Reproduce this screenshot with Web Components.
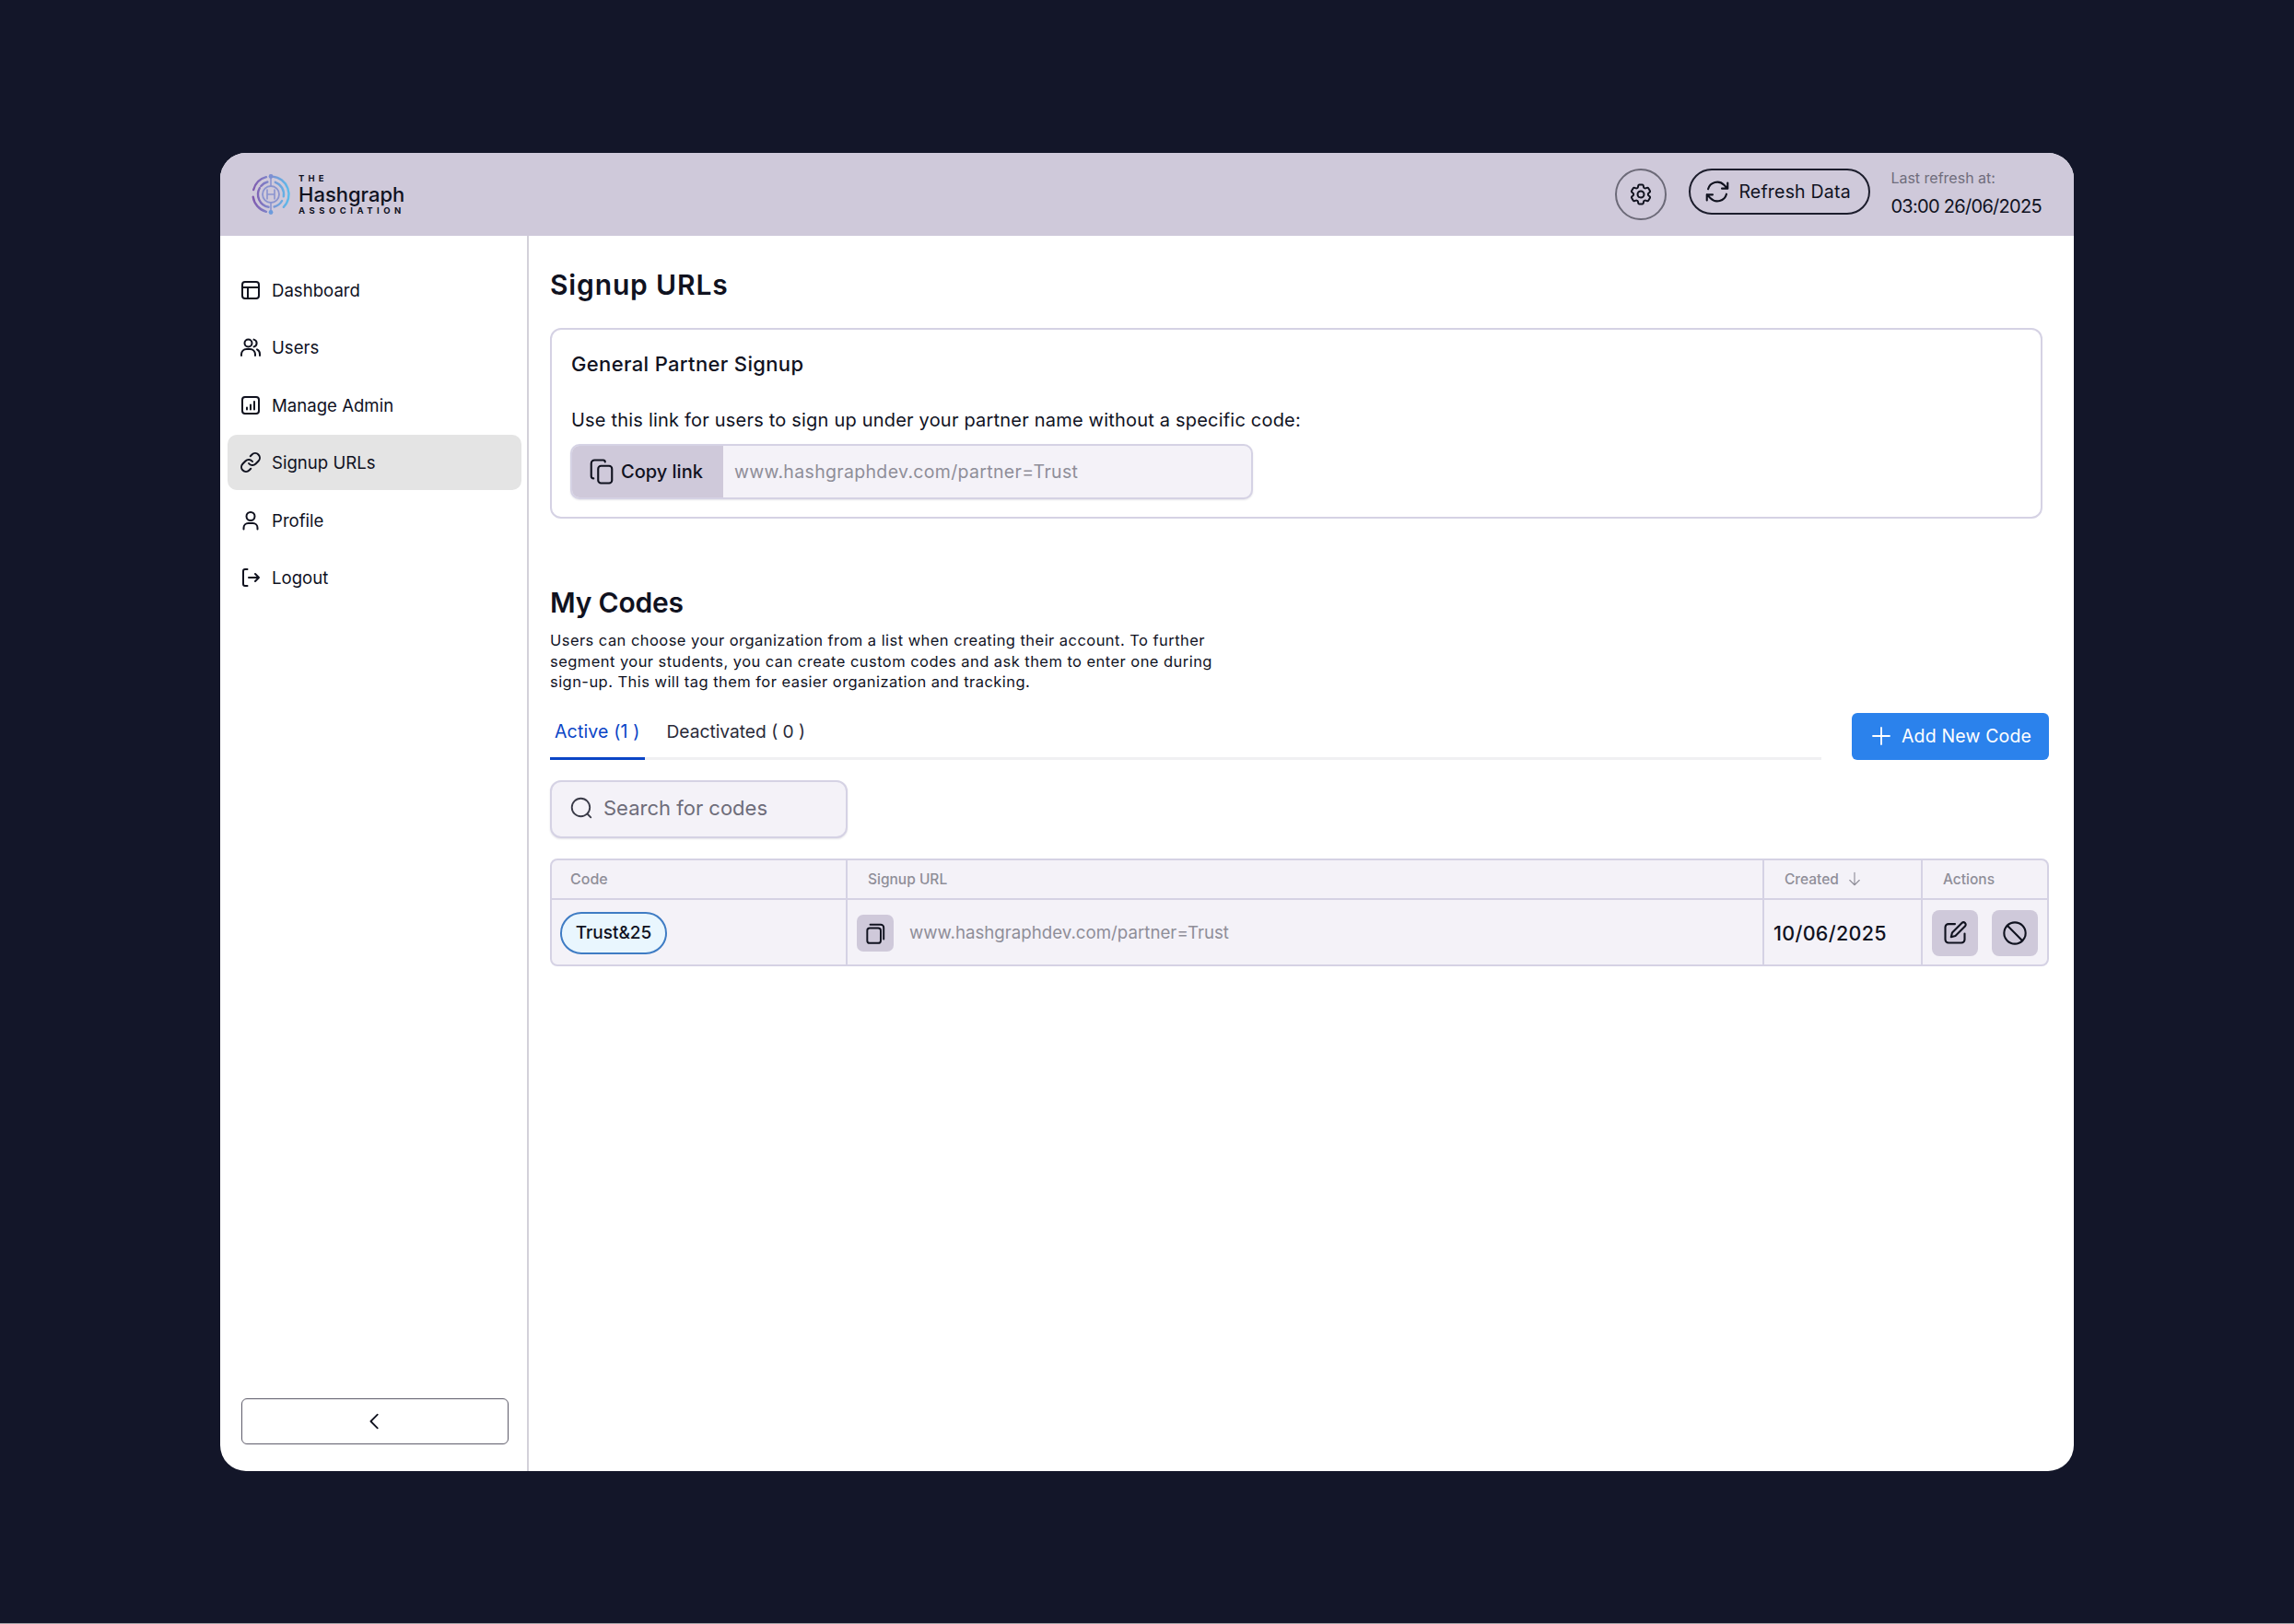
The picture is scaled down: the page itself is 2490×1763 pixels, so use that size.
<!DOCTYPE html>
<html lang="en">
<head>
<meta charset="utf-8">
<title>Signup URLs</title>
<style>
  html { background: #a3a3a8; }
  body { margin: 0; height: 1762px; background: #131629; font-family: Inter, "Liberation Sans", sans-serif; overflow: hidden; }
</style>
</head>
<body>
<app-shell>
  <app-header slot="header"></app-header>
  <side-nav slot="nav">
    <nav-item icon="layout">Dashboard</nav-item>
    <nav-item icon="users">Users</nav-item>
    <nav-item icon="chart">Manage Admin</nav-item>
    <nav-item icon="link" active>Signup URLs</nav-item>
    <nav-item icon="user">Profile</nav-item>
    <nav-item icon="logout">Logout</nav-item>
  </side-nav>
  <signup-card></signup-card>
  <codes-section></codes-section>
</app-shell>

<script>
const ICONS = {
  layout: '<rect x="3" y="3" width="18" height="18" rx="3"/><path d="M3 9h18M9 9v12"/>',
  users: '<circle cx="9.5" cy="7.5" r="4"/><path d="M2 21v-1.5A5.5 5.5 0 0 1 7.5 14h4a5.5 5.5 0 0 1 5.5 5.5V21"/><path d="M15.5 3.6a4 4 0 0 1 0 7.8"/><path d="M19 14.4a5.5 5.5 0 0 1 3 5.1V21"/>',
  chart: '<rect x="3" y="3" width="18" height="18" rx="3"/><path d="M8 16.5v-2M12 16.5v-5M16 16.5V8"/>',
  link: '<path d="M10 13a5 5 0 0 0 7.54.54l3-3a5 5 0 0 0-7.07-7.07l-1.72 1.71"/><path d="M14 11a5 5 0 0 0-7.54-.54l-3 3a5 5 0 0 0 7.07 7.07l1.71-1.71"/>',
  user: '<circle cx="12" cy="7.5" r="4.5"/><path d="M4.5 21.5V20a5 5 0 0 1 5-5h5a5 5 0 0 1 5 5v1.5"/>',
  logout: '<path d="M8.5 21H6a2 2 0 0 1-2-2V5a2 2 0 0 1 2-2h2.5"/><path d="M10 12h11M17 8l4 4-4 4"/>',
  gear: '<path d="M9.594 3.94c.09-.542.56-.94 1.11-.94h2.593c.55 0 1.02.398 1.11.94l.213 1.281c.063.374.313.686.645.87.074.04.147.083.22.127.325.196.72.257 1.075.124l1.217-.456a1.125 1.125 0 0 1 1.37.49l1.296 2.247a1.125 1.125 0 0 1-.26 1.431l-1.003.827c-.293.241-.438.613-.43.992a7.723 7.723 0 0 1 0 .255c-.008.378.137.75.43.991l1.004.827c.424.35.534.955.26 1.43l-1.298 2.247a1.125 1.125 0 0 1-1.369.491l-1.217-.456c-.355-.133-.75-.072-1.076.124a6.47 6.47 0 0 1-.22.128c-.331.183-.581.495-.644.869l-.213 1.281c-.09.543-.56.94-1.11.94h-2.594c-.55 0-1.019-.398-1.11-.94l-.213-1.281c-.062-.374-.312-.686-.644-.87a6.52 6.52 0 0 1-.22-.127c-.325-.196-.72-.257-1.076-.124l-1.217.456a1.125 1.125 0 0 1-1.369-.49l-1.297-2.247a1.125 1.125 0 0 1 .26-1.431l1.004-.827c.292-.24.437-.613.43-.991a6.932 6.932 0 0 1 0-.255c.007-.38-.138-.751-.43-.992l-1.004-.827a1.125 1.125 0 0 1-.26-1.43l1.297-2.247a1.125 1.125 0 0 1 1.37-.491l1.216.456c.356.133.751.072 1.076-.124.072-.044.146-.086.22-.128.332-.183.582-.495.644-.869l.214-1.28Z"/><path d="M15 12a3 3 0 1 1-6 0 3 3 0 0 1 6 0Z"/>',
  refresh: '<path d="M16.023 9.348h4.992M2.985 19.644v-4.992m0 0h4.992m-4.993 0 3.181 3.183a8.25 8.25 0 0 0 13.803-3.7M4.031 9.865a8.25 8.25 0 0 1 13.803-3.7l3.181 3.182m0-4.991v4.99"/>',
  copy: '<rect x="9" y="7" width="12" height="15" rx="2.5"/><path d="M15 3.5v-.1A1.5 1.5 0 0 0 13.5 2H6a3 3 0 0 0-3 3v11a2 2 0 0 0 2 1.9"/>',
  stack: '<rect x="4" y="7" width="13.5" height="15" rx="2.5"/><path d="M7 3.5h10.5a3 3 0 0 1 3 3V18"/>',
  search: '<circle cx="11.5" cy="11.5" r="9"/><path d="m18 18 3.5 3.5"/>',
  plus: '<path d="M12 3v18M3 12h18"/>',
  down: '<path d="M12 3v18M5 14l7 7 7-7"/>',
  pen: '<path d="M12 3.5H6a3 3 0 0 0-3 3V18a3 3 0 0 0 3 3h12a3 3 0 0 0 3-3v-5.5"/><path d="M18.4 2.6a2.1 2.1 0 0 1 3 3l-9 9-4 1 1-4z"/>',
  ban: '<circle cx="12" cy="12" r="10"/><path d="m5 5 14 14"/>',
  chevron: '<path d="m15 4-8 8 8 8"/>'
};

class UiIcon extends HTMLElement {
  constructor() {
    super();
    this.attachShadow({ mode: 'open' });
  }

  connectedCallback() {
    const size = this.getAttribute('size') || 24;
    const stroke = this.getAttribute('stroke') || 2;
    this.shadowRoot.innerHTML = `
      <style>
        :host { display: inline-flex; width: ${size}px; height: ${size}px; flex: none; }
        svg { width: 100%; height: 100%; fill: none; stroke: currentColor; stroke-width: ${stroke}; stroke-linecap: round; stroke-linejoin: round; }
      </style>
      <svg viewBox="0 0 24 24">${ICONS[this.getAttribute('name')]}</svg>`;
  }
}
customElements.define('ui-icon', UiIcon);

const shellTemplate = document.createElement('template');
shellTemplate.innerHTML = `
<style>
  :host {
    display: grid;
    grid-template-columns: 335px 1fr;
    grid-template-rows: 90px 1fr;
    position: absolute;
    left: 239px;
    top: 166px;
    width: 2012px;
    height: 1431px;
    background: #fff;
    border-radius: 28px;
    overflow: hidden;
  }
  .head { grid-column: 1 / 3; }
  .main { padding: 33px 27px 0 23px; }
  h1 {
    margin: 0 0 27px;
    font: 600 30px/40px Inter, sans-serif;
    letter-spacing: 0.85px;
    color: #10121f;
  }
</style>
<div class="head"><slot name="header"></slot></div>
<slot name="nav"></slot>
<div class="main">
  <h1>Signup URLs</h1>
  <slot></slot>
</div>
`;
class AppShell extends HTMLElement {
  constructor() {
    super();
    this.attachShadow({ mode: 'open' }).appendChild(shellTemplate.content.cloneNode(true));
  }
}
customElements.define('app-shell', AppShell);

const headerTemplate = document.createElement('template');
headerTemplate.innerHTML = `
<style>
  :host {
    display: flex;
    align-items: flex-start;
    justify-content: space-between;
    height: 90px;
    box-sizing: border-box;
    padding: 17px 35px 0 33px;
    background: #cfc9da;
    color: #10121f;
  }
  .tools { display: flex; align-items: flex-start; }
  .gear {
    display: flex;
    align-items: center;
    justify-content: center;
    width: 56px;
    height: 56px;
    box-sizing: border-box;
    border: 2px solid #6c6a78;
    border-radius: 50%;
    margin-right: 24px;
  }
  .refresh {
    display: flex;
    align-items: center;
    gap: 8px;
    width: 197px;
    height: 50px;
    box-sizing: border-box;
    padding-left: 14px;
    border: 2px solid #1c1d2c;
    border-radius: 25px;
    font-size: 19.5px;
    letter-spacing: 0.2px;
    margin-right: 22px;
  }
  .meta { display: flex; flex-direction: column; }
  .last { font-size: 16px; line-height: 20px; color: #6f6d7c; }
  .date { margin-top: 9px; font-size: 20px; line-height: 24px; letter-spacing: -0.7px; }
</style>
<brand-logo></brand-logo>
<div class="tools">
  <div class="gear"><ui-icon name="gear" size="28" stroke="1.7"></ui-icon></div>
  <div class="refresh"><ui-icon name="refresh" size="30" stroke="1.7"></ui-icon><span>Refresh Data</span></div>
  <div class="meta">
    <span class="last">Last refresh at:</span>
    <span class="date">03:00 26/06/2025</span>
  </div>
</div>
`;
class AppHeader extends HTMLElement {
  constructor() {
    super();
    this.attachShadow({ mode: 'open' }).appendChild(headerTemplate.content.cloneNode(true));
  }
}
customElements.define('app-header', AppHeader);

const logoTemplate = document.createElement('template');
logoTemplate.innerHTML = `
<style>
  :host { display: flex; align-items: center; gap: 8px; margin-top: 4px; color: #10121f; }
  svg { width: 44px; height: 48px; flex: none; }
  .words { display: flex; flex-direction: column; width: 118px; }
  .small { font-size: 9.5px; line-height: 11px; font-weight: 700; }
  .the { letter-spacing: 4.2px; }
  .assoc { letter-spacing: 4.5px; white-space: nowrap; }
  .big { font-size: 22px; line-height: 24px; font-weight: 500; }
</style>
<svg viewBox="0 0 44 48" fill="none" stroke="url(#g)" stroke-width="2.4" stroke-linecap="round">
  <defs>
    <linearGradient id="g" gradientUnits="userSpaceOnUse" x1="2" y1="24" x2="42" y2="24">
      <stop offset="0" stop-color="#7f57ad"/>
      <stop offset="0.5" stop-color="#7f8fd0"/>
      <stop offset="1" stop-color="#5bbcec"/>
    </linearGradient>
  </defs>
  <path d="M23.7 4.6A19.5 19.5 0 0 1 35.8 37.8"/>
  <path d="M3.2 19A19.5 19.5 0 0 1 17 5.2"/>
  <path d="M2.7 26.7A19.5 19.5 0 0 0 17 42.8"/>
  <path d="M26.8 10.8A14 14 0 0 1 35.8 26.4"/>
  <path d="M19.6 37.8A14 14 0 0 1 9.9 17"/>
  <path d="M11.3 15A14 14 0 0 1 18.4 10.5"/>
  <path d="M34.1 31A14 14 0 0 1 25.6 37.5"/>
  <circle cx="22" cy="24" r="9" stroke="#8a94cf" stroke-width="1.8"/>
  <path d="M18 19v10M26 19v10M18 24h8M22 5v10M22 33v10" stroke="#8a94cf" stroke-width="1.6"/>
  <circle cx="22" cy="4.5" r="2.4" fill="#7d8fd2" stroke="none"/>
  <circle cx="22" cy="43.5" r="2.4" fill="#6c9bdc" stroke="none"/>
</svg>
<div class="words">
  <span class="small the">THE</span>
  <span class="big">Hashgraph</span>
  <span class="small assoc">ASSOCIATION</span>
</div>
`;
class BrandLogo extends HTMLElement {
  constructor() {
    super();
    this.attachShadow({ mode: 'open' }).appendChild(logoTemplate.content.cloneNode(true));
  }
}
customElements.define('brand-logo', BrandLogo);

const sideTemplate = document.createElement('template');
sideTemplate.innerHTML = `
<style>
  :host {
    display: flex;
    flex-direction: column;
    gap: 2.5px;
    box-sizing: border-box;
    padding: 28.5px 6px 29px 8px;
    border-right: 2px solid #d3d1da;
  }
  button {
    display: flex;
    align-items: center;
    justify-content: center;
    width: 290px;
    height: 50px;
    margin: auto 0 0 15px;
    background: #fff;
    border: 1.5px solid #5f5d6b;
    border-radius: 6px;
    color: #10121f;
    padding: 0;
  }
</style>
<slot></slot>
<button aria-label="Collapse"><ui-icon name="chevron" size="22" stroke="2"></ui-icon></button>
`;
class SideNav extends HTMLElement {
  constructor() {
    super();
    this.attachShadow({ mode: 'open' }).appendChild(sideTemplate.content.cloneNode(true));
  }
}
customElements.define('side-nav', SideNav);

class NavItem extends HTMLElement {
  constructor() {
    super();
    this.attachShadow({ mode: 'open' }).innerHTML = `
      <style>
        :host {
          display: flex;
          align-items: center;
          gap: 11px;
          height: 60px;
          flex: none;
          box-sizing: border-box;
          padding-left: 13px;
          border-radius: 10px;
          font-size: 18.6px;
          color: #10121f;
        }
        :host([active]) { background: #e4e4e4; }
      </style>
      <ui-icon name="${this.getAttribute('icon')}"></ui-icon>
      <slot></slot>`;
  }
}
customElements.define('nav-item', NavItem);

const cardTemplate = document.createElement('template');
cardTemplate.innerHTML = `
<style>
  :host {
    display: block;
    height: 207px;
    box-sizing: border-box;
    margin-right: 7px;
    padding: 22px 21px 0;
    border: 2px solid #d5d2e4;
    border-radius: 12px;
    color: #10121f;
  }
  h2 { margin: 0; font: 500 22px/30px Inter, sans-serif; letter-spacing: 0.35px; }
  p { margin: 32px 0 12px; font-size: 20px; line-height: 28px; letter-spacing: 0.2px; }
  .field {
    display: flex;
    align-items: stretch;
    width: 741px;
    height: 60px;
    box-sizing: border-box;
    margin-left: -1px;
    background: #f4f2f8;
    border: 2px solid #d5d2e4;
    border-radius: 10px;
    overflow: hidden;
    box-shadow: 0 1px 2px rgba(40, 30, 70, .12);
  }
  .copy {
    display: flex;
    align-items: center;
    gap: 6px;
    width: 164px;
    box-sizing: border-box;
    padding-left: 17px;
    background: #cfc9da;
    font-size: 20px;
    font-weight: 500;
  }
  .url { display: flex; align-items: center; padding-left: 12px; font-size: 19.5px; letter-spacing: 0.33px; color: #8f8e98; }
</style>
<h2>General Partner Signup</h2>
<p>Use this link for users to sign up under your partner name without a specific code:</p>
<div class="field">
  <div class="copy"><ui-icon name="copy" size="30" stroke="1.7"></ui-icon><span>Copy link</span></div>
  <div class="url">www.hashgraphdev.com/partner=Trust</div>
</div>
`;
class SignupCard extends HTMLElement {
  constructor() {
    super();
    this.attachShadow({ mode: 'open' }).appendChild(cardTemplate.content.cloneNode(true));
  }
}
customElements.define('signup-card', SignupCard);

const codesTemplate = document.createElement('template');
codesTemplate.innerHTML = `
<style>
  :host { display: block; margin-top: 71px; color: #10121f; }
  h2 { margin: 0; font: 600 30px/40px Inter, sans-serif; letter-spacing: -0.2px; }
  p { margin: 10px 0 0; width: 735px; font-size: 16.5px; line-height: 22.5px; letter-spacing: 0.45px; }
  .bar { display: flex; align-items: flex-end; gap: 33px; margin-top: 22px; }
  .tabs { display: flex; flex: 1; height: 51px; border-bottom: 3px solid #f0f0f2; box-sizing: border-box; }
  .tab { height: 51px; box-sizing: border-box; padding: 6.5px 6px 0; font-size: 19.5px; line-height: 28px; }
  .tab.on { padding-left: 5px; letter-spacing: 0.15px; color: #0b45c6; border-bottom: 3px solid #0b45c6; }
  .tab.off { padding-left: 23px; font-size: 19.2px; color: #2a2b3a; }
  .add {
    display: flex;
    align-items: center;
    gap: 10px;
    width: 214px;
    height: 51px;
    box-sizing: border-box;
    padding-left: 20px;
    background: #2b82ec;
    border-radius: 6px;
    color: #fff;
    font-size: 19.5px;
    letter-spacing: 0.15px;
  }
  .search {
    display: flex;
    align-items: center;
    gap: 11px;
    width: 323px;
    height: 63px;
    box-sizing: border-box;
    margin: 22px 0 22px;
    padding: 0 0 2px 19px;
    background: #f4f2f8;
    border: 2px solid #d5d2e4;
    border-radius: 12px;
    font-size: 22px;
    color: #6e6d7a;
    box-shadow: 0 1px 2px rgba(40, 30, 70, .12);
  }
  .search ui-icon { color: #3a3b48; }
</style>
<h2>My Codes</h2>
<p>Users can choose your organization from a list when creating their account. To further segment your students, you can create custom codes and ask them to enter one during sign-up. This will tag them for easier organization and tracking.</p>
<div class="bar">
  <div class="tabs">
    <div class="tab on">Active (1 )</div>
    <div class="tab off">Deactivated ( 0 )</div>
  </div>
  <div class="add"><ui-icon name="plus" size="24" stroke="1.8"></ui-icon><span>Add New Code</span></div>
</div>
<div class="search"><ui-icon name="search" size="26" stroke="1.7"></ui-icon><span>Search for codes</span></div>
<codes-table></codes-table>
`;
class CodesSection extends HTMLElement {
  constructor() {
    super();
    this.attachShadow({ mode: 'open' }).appendChild(codesTemplate.content.cloneNode(true));
  }
}
customElements.define('codes-section', CodesSection);

const tableTemplate = document.createElement('template');
tableTemplate.innerHTML = `
<style>
  :host {
    display: grid;
    grid-template-columns: 319px 995px 172px 1fr;
    grid-template-rows: 43px 72px;
    height: 117px;
    width: 1627px;
    box-sizing: border-box;
    background: #f4f2f8;
    border: 2px solid #d5d2e4;
    border-radius: 8px;
    overflow: hidden;
    color: #10121f;
  }
  .cell { display: flex; align-items: center; box-sizing: border-box; border-left: 2px solid #d5d2e4; }
  .first { border-left: 0; }
  .th {
    padding-left: 22px;
    gap: 8px;
    border-bottom: 2px solid #d5d2e4;
    font-size: 15.5px;
    font-weight: 500;
    color: #8f8e98;
  }
  .th.first { padding-left: 20px; font-size: 16px; }
  .chip {
    display: flex;
    align-items: center;
    justify-content: center;
    width: 116px;
    height: 46px;
    box-sizing: border-box;
    margin-left: 9px;
    background: #e9f6fe;
    border: 2px solid #3f7cc4;
    border-radius: 23px;
    font-size: 19px;
    font-weight: 500;
  }
  .square {
    display: flex;
    align-items: center;
    justify-content: center;
    width: 40px;
    height: 40px;
    margin: 0 17px 0 10px;
    background: #cfc9da;
    border-radius: 7px;
  }
  .link { font-size: 18.7px; color: #8f8e98; }
  .created { padding-left: 10px; font-size: 21.5px; font-weight: 500; letter-spacing: 0.3px; }
  .acts { gap: 15px; padding-left: 10px; }
  .act {
    display: flex;
    align-items: center;
    justify-content: center;
    width: 50px;
    height: 50px;
    background: #cfc9da;
    border-radius: 8px;
  }
</style>
<div class="cell th first">Code</div>
<div class="cell th">Signup URL</div>
<div class="cell th">Created <ui-icon name="down" size="18" stroke="1.5"></ui-icon></div>
<div class="cell th">Actions</div>
<div class="cell first"><span class="chip">Trust&amp;25</span></div>
<div class="cell"><span class="square"><ui-icon name="stack" size="26" stroke="1.8"></ui-icon></span><span class="link">www.hashgraphdev.com/partner=Trust</span></div>
<div class="cell created">10/06/2025</div>
<div class="cell acts">
  <span class="act"><ui-icon name="pen" size="28" stroke="1.8"></ui-icon></span>
  <span class="act"><ui-icon name="ban" size="28" stroke="1.8"></ui-icon></span>
</div>
`;
class CodesTable extends HTMLElement {
  constructor() {
    super();
    this.attachShadow({ mode: 'open' }).appendChild(tableTemplate.content.cloneNode(true));
  }
}
customElements.define('codes-table', CodesTable);
</script>
</body>
</html>
